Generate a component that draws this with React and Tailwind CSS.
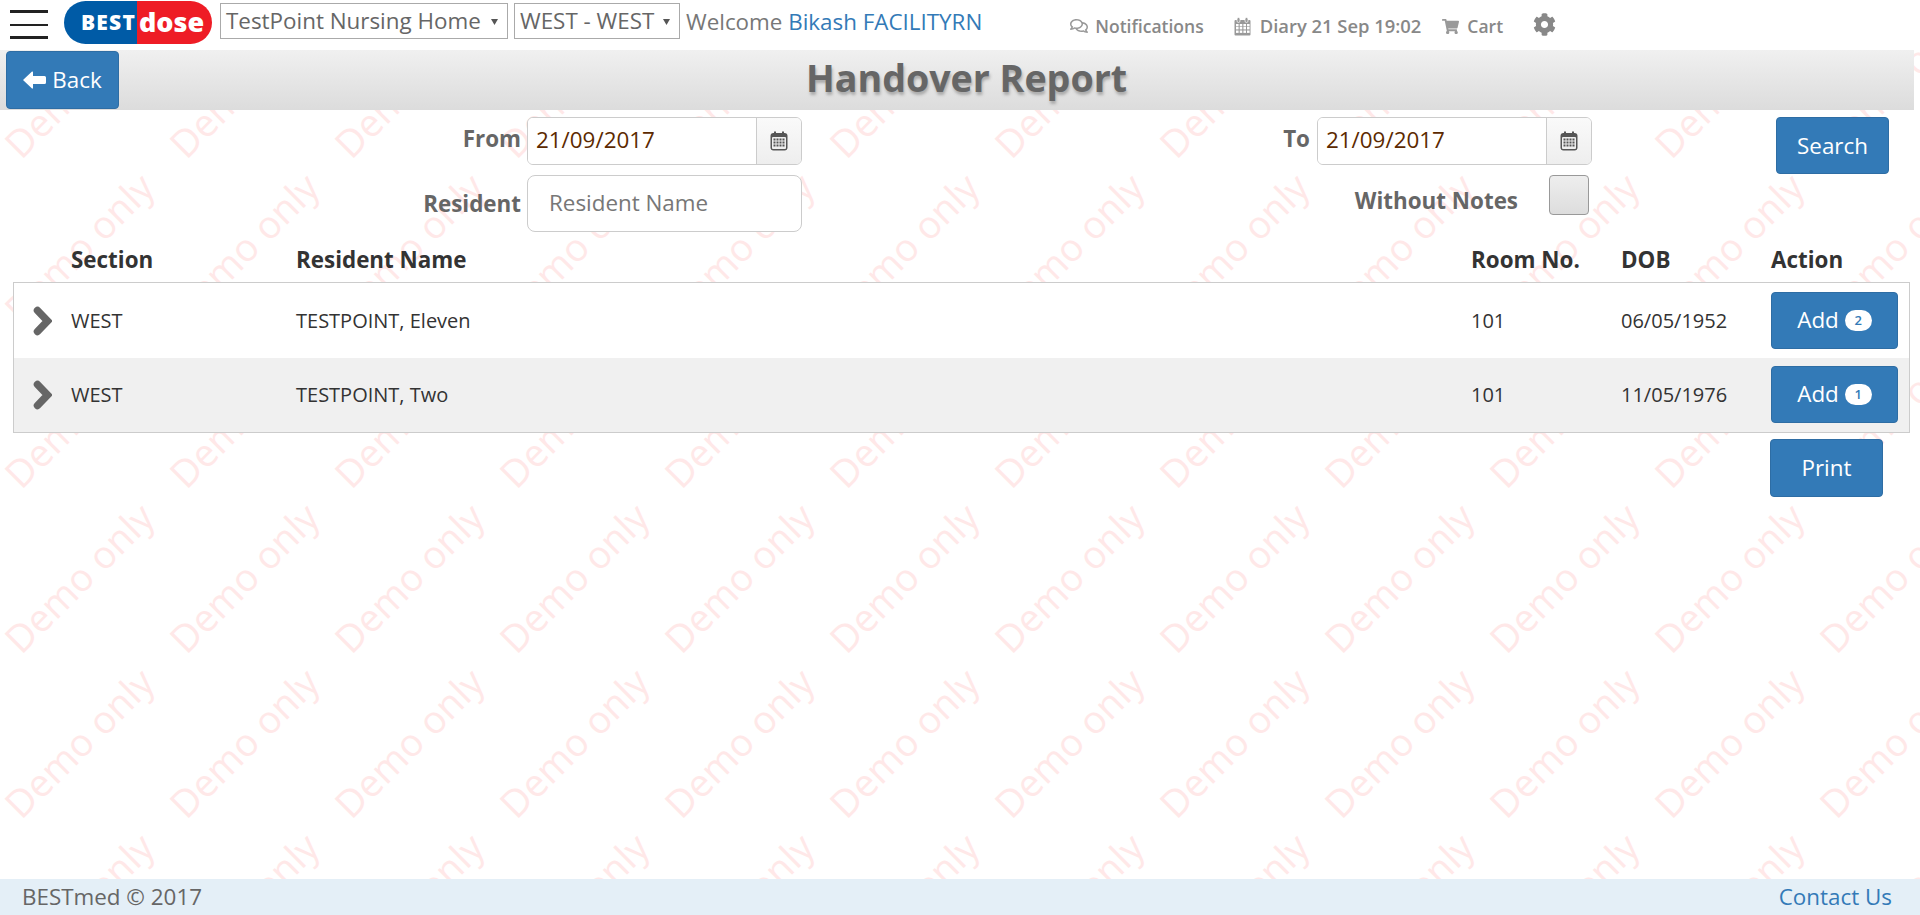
import { FaRegComments, FaShoppingCart, FaCog } from 'react-icons/fa'

const CELDAS = Array.from({ length: 72 })

const FILAS = [
  { seccion: 'WEST', nombre: 'TESTPOINT, Eleven', cuarto: '101', dob: '06/05/1952', badge: 2 },
  { seccion: 'WEST', nombre: 'TESTPOINT, Two', cuarto: '101', dob: '11/05/1976', badge: 1 },
]

function Calendario() {
  return (
    <svg width="18" height="20" viewBox="0 0 18 20">
      <rect x="0.5" y="2" width="17" height="17.5" rx="3" fill="#555" />
      <rect x="4" y="0.5" width="2" height="3" fill="#555" />
      <rect x="12" y="0.5" width="2" height="3" fill="#555" />
      <rect x="2" y="6" width="14" height="12" rx="1" fill="#eee" />
      {[7.5, 10.5, 13.5].map(y =>
        [3.5, 6.5, 9.5, 12.5].map(x => <rect key={x + '-' + y} x={x} y={y} width="2" height="2" fill="#555" />)
      )}
    </svg>
  )
}

function Agenda() {
  return (
    <svg width="17" height="19" viewBox="0 0 17 19" className="ml-[30px]">
      <path d="M1.5 3h14a1 1 0 0 1 1 1v13.5a1 1 0 0 1-1 1h-14a1 1 0 0 1-1-1V4a1 1 0 0 1 1-1z" fill="#999" />
      <rect x="3" y="0.5" width="3" height="5" rx="1.5" fill="#999" stroke="#fff" strokeWidth="0.7" />
      <rect x="11" y="0.5" width="3" height="5" rx="1.5" fill="#999" stroke="#fff" strokeWidth="0.7" />
      {[7, 10, 13.5].map(y =>
        [2, 5.7, 9.4, 13].map(x => <rect key={x + '-' + y} x={x} y={y} width="2.6" height="2.4" fill="#fff" />)
      )}
    </svg>
  )
}

function Fecha() {
  return (
    <div className="flex h-[48px] bg-white border border-[#ccc] rounded-[6px] overflow-hidden">
      <input
        readOnly
        value="21/09/2017"
        className="min-w-0 flex-1 px-[8px] pb-[2px] text-[22.4px] text-[#5c2a00] outline-none bg-white"
      />
      <div className="w-[45px] flex items-center justify-center border-l border-[#ccc] bg-gradient-to-b from-[#fafafa] to-[#eeeeee]">
        <Calendario />
      </div>
    </div>
  )
}

function Boton({ className, children }) {
  return (
    <button className={`flex items-center justify-center bg-[#337ab7] border border-[#2e6da4] rounded-[4px] text-white text-[22.4px] ${className}`}>
      {children}
    </button>
  )
}

function Selector({ texto, className }) {
  return (
    <div className={`flex items-center justify-between h-[36px] pl-[5px] pr-[9px] bg-white border border-[#aaa] text-[22.4px] text-[#666] ${className}`}>
      <span>{texto}</span>
      <svg width="7" height="7" viewBox="0 0 7 7"><path d="M0 1h7L3.5 7z" fill="#555" /></svg>
    </div>
  )
}

export default function App() {
  return (
    <div className="relative h-[915px] overflow-hidden bg-white flex flex-col font-['Open_Sans',sans-serif]">
      {/* marca de agua */}
      <div className="absolute -left-[4px] top-0 grid grid-cols-[repeat(12,165px)] auto-rows-[165px] pointer-events-none">
        {CELDAS.map((_, i) => (
          <div key={i} className="flex items-center justify-center">
            <span className="-rotate-45 whitespace-nowrap text-[38px] text-[#ffe8e8]">Demo only</span>
          </div>
        ))}
      </div>

      {/* Header */}
      <div className="relative h-[50px] bg-white flex items-start">
        <div className="ml-[10px] mt-[10px] w-[38px] flex flex-col gap-[10.5px]">
          <div className="h-[3px] bg-[#222]" />
          <div className="h-[2px] bg-[#222]" />
          <div className="h-[3px] bg-[#222]" />
        </div>
        <div className="ml-[16px] mt-[1px] w-[148px] h-[43px] rounded-full overflow-hidden flex">
          <div className="w-[73px] bg-[#005ba6] flex items-center justify-end pr-[1px]">
            <span className="font-extrabold text-white text-[21px] tracking-[1.2px]">BEST</span>
          </div>
          <div className="flex-1 bg-[#ee1c25] flex items-center pl-[2px] pb-[3px]">
            <span className="font-extrabold text-white text-[27px] leading-none">dose</span>
          </div>
        </div>
        <Selector texto="TestPoint Nursing Home" className="ml-[8px] mt-[3px] w-[288px]" />
        <Selector texto="WEST - WEST" className="ml-[6px] mt-[3px] w-[166px]" />
        <div className="ml-[6px] mt-[7px] text-[22.4px] leading-[30px] text-[#777]">
          Welcome <span className="text-[#337ab7]">Bikash FACILITYRN</span>
        </div>
        <div className="ml-[88px] mt-[14px] flex items-center text-[17.5px] leading-[24px] font-semibold text-[#888]">
          <FaRegComments className="text-[18px] text-[#999]" />
          <span className="ml-[7px]">Notifications</span>
          <Agenda />
          <span className="ml-[9px] text-[18.4px]">Diary 21 Sep 19:02</span>
          <FaShoppingCart className="ml-[21px] text-[17px] text-[#999]" />
          <span className="ml-[8px]">Cart</span>
          <FaCog className="ml-[30px] -mt-[4px] text-[23px] text-[#888]" />
        </div>
      </div>

      {/* Titulo */}
      <div className="relative h-[60px] w-[1914px] pl-[6px] flex items-center bg-gradient-to-b from-[#f0f0f0] to-[#dcdcdc]">
        <Boton className="w-[113px] h-[58px] gap-[6px]">
          <svg width="23" height="18" viewBox="0 0 23 18">
            <path d="M0 9L9 0.5Q10 0 10 1.5V5H21.5Q23 5 23 6.5V11.5Q23 13 21.5 13H10V16.5Q10 18 9 17.5Z" fill="#fff" />
          </svg>
          Back
        </Boton>
        <h1 className="ml-[687px] pb-[4px] text-[37.6px] font-bold text-[#666] [text-shadow:1px_3px_3px_#aaa]">Handover Report</h1>
      </div>

      {/* Filtros */}
      <div className="relative flex mt-[7px] h-[115px]">
        <div className="w-[802px] flex flex-col gap-[10px]">
          <div className="flex justify-end items-start gap-[6px]">
            <label className="font-bold text-[22.4px] text-[#666] leading-[44px]">From</label>
            <div className="w-[275px]"><Fecha /></div>
          </div>
          <div className="flex justify-end items-center gap-[6px]">
            <label className="font-bold text-[22.4px] text-[#666]">Resident</label>
            <input
              placeholder="Resident Name"
              className="w-[275px] h-[57px] px-[21px] pb-[2px] bg-white border border-[#ccc] rounded-[8px] text-[22.4px] outline-none placeholder:text-[#777]"
            />
          </div>
        </div>
        <div className="w-[790px] flex flex-col gap-[10px]">
          <div className="flex justify-end items-start gap-[7px]">
            <label className="font-bold text-[22.4px] text-[#666] leading-[44px]">To</label>
            <div className="w-[275px]"><Fecha /></div>
          </div>
          <div className="flex justify-end items-start">
            <label className="font-bold text-[22.4px] leading-[52px] text-[#666]">Without Notes</label>
            <div className="ml-[31px] mr-[3px] w-[40px] h-[40px] rounded-[4px] border border-[#999] bg-gradient-to-b from-[#eeeeee] to-[#dddddd]" />
          </div>
        </div>
        <Boton className="ml-[184px] w-[113px] h-[57px]">Search</Boton>
      </div>

      {/* Tabla */}
      <div className="relative mx-[13px] w-[1897px] pt-[15px] h-[50px] grid grid-cols-[58px_225px_1175px_150px_150px_1fr] text-[22.4px] font-bold text-[#333] leading-[26px]">
        <span />
        <span>Section</span>
        <span>Resident Name</span>
        <span>Room No.</span>
        <span>DOB</span>
        <span>Action</span>
      </div>
      <div className="relative mx-[13px] w-[1897px] border border-[#ccc] bg-white">
        {FILAS.map((fila, i) => (
          <div key={fila.nombre} className={`grid grid-cols-[57px_225px_1175px_150px_150px_1fr] items-center text-[20px] text-[#333] ${i === 0 ? 'h-[75px]' : 'h-[74px] pb-[1px] bg-[#f0f0f0]'}`}>
            <svg width="19" height="30" viewBox="0 0 19 30" className="ml-[19px]">
              <path d="M4.5 4.5L14.5 15L4.5 25.5" fill="none" stroke="#666" strokeWidth="7.5" strokeLinecap="round" />
            </svg>
            <span>{fila.seccion}</span>
            <span>{fila.nombre}</span>
            <span>{fila.cuarto}</span>
            <span>{fila.dob}</span>
            <Boton className="w-[127px] h-[57px] gap-[6px]">
              <span className="pb-[2px]">Add</span>
              <span className="w-[27px] h-[21px] rounded-full bg-white text-[#337ab7] text-[13px] font-semibold flex items-center justify-center">{fila.badge}</span>
            </Boton>
          </div>
        ))}
      </div>

      <div className="relative flex justify-end mt-[6px] mr-[37px]">
        <Boton className="w-[113px] h-[58px]">Print</Boton>
      </div>

      {/* Footer */}
      <div className="relative mt-auto h-[36px] px-[22px] pr-[28px] flex items-center justify-between bg-[#e4eff7] text-[22.4px] text-[#666]">
        <span>BESTmed © 2017</span>
        <span className="text-[#337ab7]">Contact Us</span>
      </div>
    </div>
  )
}
